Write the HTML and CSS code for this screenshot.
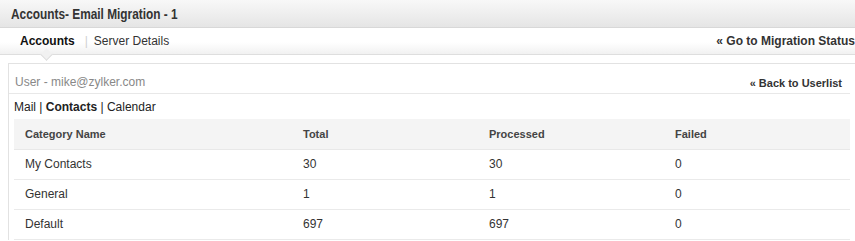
FILE: index.html
```html
<!DOCTYPE html>
<html>
<head>
<meta charset="utf-8">
<link rel="stylesheet" href="styles.css">
</head>
<body>
<div class="page">
  <div class="titlebar"><h1 class="title">Accounts- Email Migration - 1</h1></div>
  <div class="tabbar">
    <nav class="tabs">
      <span class="tab tab-active">Accounts</span>
      <span class="tab-sep">|</span>
      <span class="tab">Server Details</span>
    </nav>
    <a class="link-strong">« Go to Migration Status</a>
    <span class="caret"></span>
  </div>
  <div class="panel">
    <div class="panel-head">
      <span class="user">User - mike@zylker.com</span>
      <a class="link-strong back">« Back to Userlist</a>
    </div>
    <div class="subnav">Mail | <b>Contacts</b> | Calendar</div>
    <table class="grid">
      <thead>
        <tr><th class="c1">Category Name</th><th>Total</th><th>Processed</th><th>Failed</th></tr>
      </thead>
      <tbody>
        <tr><td>My Contacts</td><td>30</td><td>30</td><td>0</td></tr>
        <tr><td>General</td><td>1</td><td>1</td><td>0</td></tr>
        <tr><td>Default</td><td>697</td><td>697</td><td>0</td></tr>
      </tbody>
    </table>
  </div>
</div>
</body>
</html>
```
FILE: styles.css
```css
* { box-sizing: border-box; }
html, body { margin: 0; padding: 0; background: #fff; }
body { font-family: "Liberation Sans", Arial, sans-serif; color: #222; overflow: hidden; }
.page { width: 855px; }
.titlebar {
  height: 28px;
  background: linear-gradient(#f8f8f8, #e5e5e5);
  border-bottom: 1px solid #d8d8d8;
  padding-left: 11px;
  display: flex;
  align-items: center;
}
.title {
  margin: 0;
  font-size: 15px;
  font-weight: bold;
  color: #333;
  white-space: nowrap;
  transform: scaleX(0.79);
  transform-origin: left center;
}
.tabbar {
  position: relative;
  height: 27px;
  background: linear-gradient(#fff 55%, #f1f1f1);
  border-bottom: 1px solid #dedede;
  display: flex;
  align-items: center;
  justify-content: space-between;
  padding-left: 20px;
}
.tabs { display: flex; align-items: center; font-size: 12px; }
.tab { color: #333; }
.tab-active { font-weight: bold; color: #111; }
.tab-sep { color: #d0d0d0; margin: 0 6px 0 10px; font-size: 12px; }
.link-strong { font-size: 12px; font-weight: bold; color: #333; white-space: nowrap; }
.caret {
  position: absolute;
  left: 42px;
  bottom: -5px;
  width: 9px; height: 9px;
  background: #f1f1f1;
  border-right: 1px solid #dedede;
  border-bottom: 1px solid #dedede;
  transform: rotate(45deg);
}
.panel {
  margin: 8px 0 0 8px;
  border-top: 1px solid #e2e2e2;
  border-left: 1px solid #e2e2e2;
}
.panel-head {
  display: flex;
  justify-content: space-between;
  align-items: flex-end;
  height: 30px;
  border-bottom: 1px solid #e8e8e8;
  margin-right: 5px;
  padding: 0 8px 4px 6px;
}
.user { font-size: 12px; color: #888; }
.back { font-size: 11px; }
.subnav { font-size: 12px; color: #222; padding: 6px 0 0 5px; height: 25px; }
.grid { border-collapse: collapse; width: 836px; table-layout: fixed; margin-left: 5px; }
.grid th, .grid td { text-align: left; padding: 0 11px; height: 30px; }
.grid th { background: #f4f4f4; font-size: 11px; font-weight: bold; color: #444; border-bottom: 1px solid #e8e8e8; }
.grid th.c1 { width: 278px; }
.grid td { font-size: 12px; color: #333; border-bottom: 1px solid #eaeaea; }
```
